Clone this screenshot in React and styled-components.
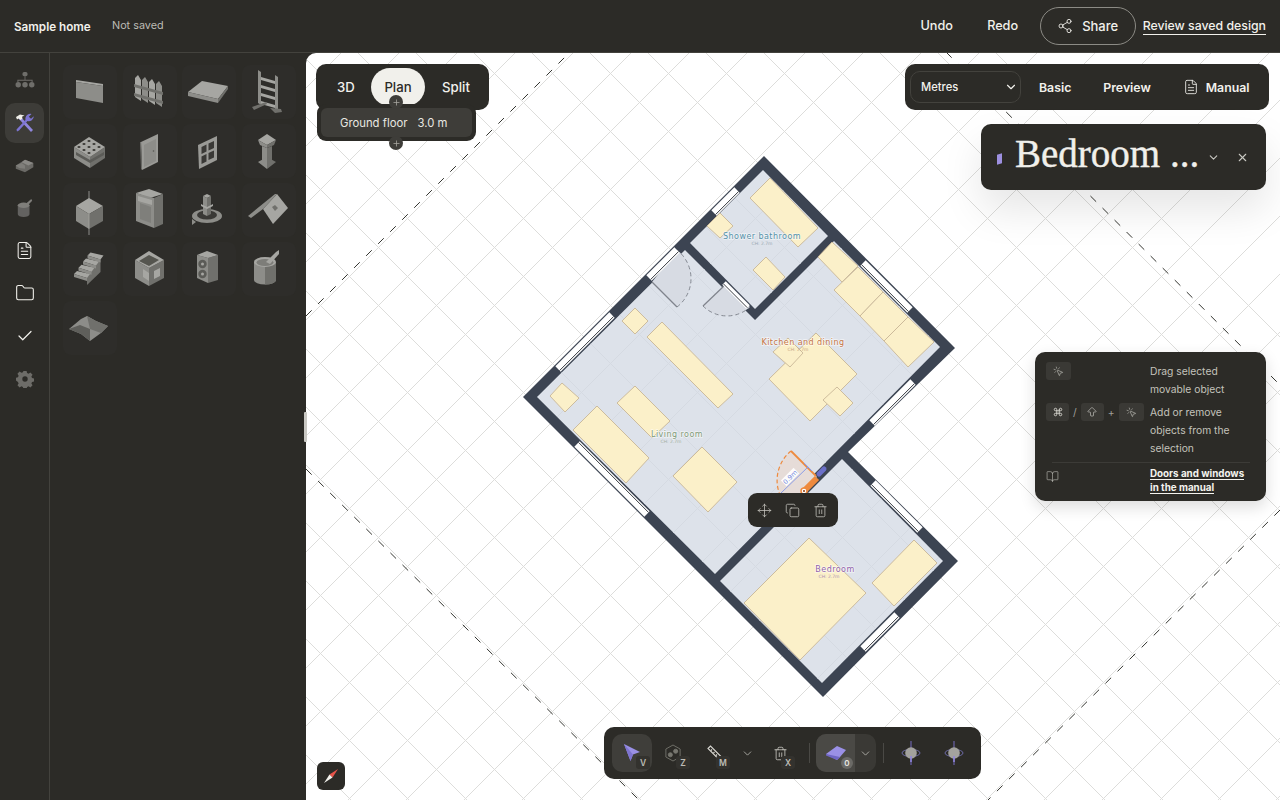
import React from "react";
import styled, { createGlobalStyle } from "styled-components";
import {
  ArrowBigUp,
  BookOpen,
  Check,
  ChevronDown,
  Command,
  Copy,
  FileText,
  Folder,
  MousePointerClick,
  Move,
  Plus,
  Share2,
  Trash2,
  X,
} from "lucide-react";

const GlobalStyle = createGlobalStyle`
  html, body { margin: 0; padding: 0; height: 100%; overflow: hidden; background: #2c2b27; }
  body { font-family: "Inter", "Liberation Sans", sans-serif; color: #f2f1ec; }
`;

const Shell = styled.div`
  display: grid;
  grid-template-columns: 50px 256px 974px;
  grid-template-rows: 53px 747px;
  height: 800px;
  width: 1280px;
  overflow: hidden;
  background: #2c2b27;
`;

const TopBar = styled.header`
  grid-column: 1 / -1;
  display: flex;
  align-items: center;
  padding: 0 14px;
  border-bottom: 1px solid #43423d;
  box-sizing: border-box;
  font-size: 13px;
  font-weight: 600;
`;

const ProjectName = styled.span`
  font-size: 11.7px;
  font-weight: 600;
  width: 98px;
  margin-top: 1px;
`;

const SaveState = styled.span`
  font-size: 10.8px;
  font-weight: 400;
  color: #bdbcb5;
  margin-bottom: 1px;
  flex: 1;
`;

const TopAction = styled.span`
  width: 66px;
  text-align: center;
  font-size: 12.7px;
  font-weight: 500;
  margin-bottom: 1px;
`;

const SharePill = styled.span`
  display: flex;
  align-items: center;
  justify-content: center;
  gap: 9px;
  width: 96px;
  height: 38px;
  box-sizing: border-box;
  border: 1px solid #8c8b85;
  border-radius: 19px;
  margin: 0 7px 0 4px;
  font-size: 13px;
  font-weight: 500;
`;

const ReviewLink = styled.span`
  font-size: 12.3px;
  font-weight: 500;
  border-bottom: 1.5px solid #f2f1ec;
  padding-bottom: 1px;
`;

const Rail = styled.nav`
  display: flex;
  flex-direction: column;
  gap: 2.7px;
  padding: 7px 0 0 5px;
  border-right: 1px solid #43423d;
  box-sizing: border-box;
`;

const RailItem = styled.span`
  display: flex;
  align-items: center;
  justify-content: center;
  width: 39px;
  height: 40px;
  border-radius: 10px;
  background: ${(p) => (p.$active ? "#3d3c38" : "transparent")};
  color: #f2f1ec;
`;

const Palette = styled.div`
  display: grid;
  grid-template-columns: repeat(4, 54px);
  grid-auto-rows: 54px;
  gap: 5px 5.5px;
  padding: 12px 0 0 13px;
  align-content: start;
`;

const PaletteTile = styled.div`
  width: 54px;
  height: 54px;
  border-radius: 8px;
  background: #2e2d2a;
  svg { display: block; }
`;

const Canvas = styled.main`
  position: relative;
  background: #fff;
  border-top-left-radius: 10px;
  overflow: hidden;
`;

const ResizeGrip = styled.div`
  position: absolute;
  left: 304px;
  top: 412px;
  width: 3px;
  height: 30px;
  background: #c9c8c3;
  border-radius: 1px;
`;

const PlanDrawing = styled.svg`
  position: absolute;
  inset: 0;
  display: block;
`;

const RoomLabel = styled.text`
  font-family: "DejaVu Sans", sans-serif;
  font-size: 8px;
  letter-spacing: 0.45px;
  text-anchor: middle;
  paint-order: stroke;
  stroke: rgba(255, 255, 255, 0.6);
  stroke-width: 1.5px;
`;

const RoomHeight = styled.text`
  font-family: "DejaVu Sans", sans-serif;
  font-size: 4.5px;
  text-anchor: middle;
  opacity: 0.8;
`;

const ViewSwitch = styled.div`
  position: absolute;
  left: 10px;
  top: 11px;
  width: 173px;
  height: 46px;
  box-sizing: border-box;
  background: #2c2b27;
  border-radius: 10px;
  display: flex;
  padding: 4px 0 0 5px;
`;

const ViewOption = styled.span`
  width: ${(p) => p.$w}px;
  height: 38px;
  border-radius: 20px;
  display: flex;
  align-items: center;
  justify-content: center;
  font-size: 13.2px;
  font-weight: 500;
  color: ${(p) => (p.$active ? "#2c2b27" : "#f2f1ec")};
  background: ${(p) => (p.$active ? "#f1f0eb" : "transparent")};
`;

const FloorControl = styled.div`
  position: absolute;
  left: 11px;
  top: 51px;
  width: 159px;
  height: 37px;
  box-sizing: border-box;
  padding: 4px;
  background: #2c2b27;
  border-radius: 9px;
`;

const FloorInner = styled.div`
  height: 29px;
  background: #3e3d39;
  border-radius: 6px;
  display: flex;
  align-items: center;
  gap: 10px;
  padding-left: 19px;
  font-size: 11.3px;
  color: #e8e7e1;
`;

const FloorStep = styled.span`
  position: absolute;
  left: 72px;
  top: ${(p) => p.$top}px;
  width: 14px;
  height: 14px;
  border-radius: 50%;
  background: #3e3d39;
  color: #a9a8a2;
  display: flex;
  align-items: center;
  justify-content: center;
`;

const UnitBar = styled.div`
  position: absolute;
  left: 599px;
  top: 11px;
  width: 364px;
  height: 46px;
  box-sizing: border-box;
  background: #2c2b27;
  border-radius: 10px;
  display: flex;
  align-items: center;
  padding-left: 5px;
  font-size: 12.3px;
  font-weight: 600;
`;

const UnitSelect = styled.div`
  width: 111px;
  height: 32px;
  box-sizing: border-box;
  border: 1px solid #43423d;
  border-radius: 10px;
  display: flex;
  align-items: center;
  justify-content: space-between;
  padding: 0 2px 0 10px;
  font-size: 11.2px;
  font-weight: 500;
  margin-right: 18px;
`;

const UnitLink = styled.span`
  display: flex;
  align-items: center;
  gap: 7px;
  margin-right: ${(p) => p.$gap}px;
`;

const TitlePanel = styled.div`
  position: absolute;
  left: 675px;
  top: 71px;
  width: 285px;
  height: 66px;
  background: #2c2b27;
  border-radius: 10px;
  box-shadow: 0 20px 40px rgba(0, 0, 0, 0.1);
  display: flex;
  align-items: center;
  padding-left: 16px;
  box-sizing: border-box;
  color: #f1f0eb;
`;

const TitleSwatch = styled.span`
  width: 5px;
  height: 10px;
  margin: 4px 13px 0 0;
  background: #9d90e0;
  transform: skewY(-18deg);
`;

const TitleText = styled.span`
  font-family: "Liberation Serif", serif;
  font-size: 39px;
  line-height: 1;
  width: 184px;
  white-space: nowrap;
  margin-bottom: 7px;
  -webkit-text-stroke: 0.4px #f1f0eb;
`;

const TitleIcon = styled.span`
  display: flex;
  width: 29px;
  justify-content: center;
  color: #c9c8c2;
`;

const HelpPanel = styled.aside`
  position: absolute;
  left: 729px;
  top: 299px;
  width: 231px;
  height: 149px;
  box-sizing: border-box;
  background: #2c2b27;
  border-radius: 10px;
  box-shadow: 0 6px 16px rgba(0, 0, 0, 0.14);
  padding: 10px 11px 0 11px;
  font-size: 10.3px;
  line-height: 18px;
  color: #c3c2bb;
  display: grid;
  grid-template-columns: 104px 1fr;
  align-content: start;
  row-gap: 5px;
`;

const KeyRow = styled.div`
  display: flex;
  align-items: center;
  gap: 4px;
  height: 18px;
  align-self: start;
  color: #9f9e98;
`;

const KeyCap = styled.span`
  display: flex;
  align-items: center;
  justify-content: center;
  height: 18px;
  width: ${(p) => p.$w}px;
  border-radius: 3px;
  background: #3a3935;
  color: #d5d4ce;
`;

const HelpRule = styled.div`
  grid-column: 1 / -1;
  height: 1px;
  background: #3c3b37;
  margin: 0 5px -5px 6px;
`;

const HelpLink = styled.span`
  color: #f4f3ee;
  font-size: 9.8px;
  font-weight: 700;
  line-height: 14px;
  display: block;
`;

const HelpLinkLine = styled.span`
  border-bottom: 1px solid #f4f3ee;
`;

const ObjectActions = styled.div`
  position: absolute;
  left: 442px;
  top: 440px;
  width: 90px;
  height: 34px;
  box-sizing: border-box;
  background: #2c2b27;
  border-radius: 9px;
  display: flex;
  align-items: center;
  padding-left: 9px;
  gap: 13px;
  color: #c9c8c2;
`;

const Dock = styled.div`
  position: absolute;
  left: 298px;
  top: 674px;
  width: 377px;
  height: 52px;
  box-sizing: border-box;
  padding: 7px 5px 7px 8px;
  background: #2c2b27;
  border-radius: 10px;
  display: flex;
  align-items: stretch;
`;

const DockButton = styled.span`
  position: relative;
  flex: none;
  width: ${(p) => p.$w}px;
  display: flex;
  align-items: center;
  justify-content: center;
  border-radius: 10px;
  color: #bdbcb5;
  background: ${(p) => (p.$active ? "#3f3e3a" : "transparent")};
`;

const DockKey = styled.span`
  position: absolute;
  right: ${(p) => p.$right}px;
  bottom: 3px;
  width: 14px;
  height: 13px;
  display: flex;
  align-items: center;
  justify-content: center;
  border-radius: 3px;
  background: #33322e;
  font-size: 8.5px;
  font-weight: 600;
  color: #bdbcb5;
`;

const DockDivider = styled.span`
  flex: none;
  width: 14px;
  display: flex;
  justify-content: center;
  align-items: center;
  &::before {
    content: "";
    width: 1px;
    height: 20px;
    background: #4a4945;
  }
`;

const DockGroup = styled.div`
  flex: none;
  width: 60px;
  display: flex;
  border-radius: 10px;
  overflow: hidden;
  background: #3a3935;
`;

const DockGroupMain = styled.span`
  position: relative;
  width: 39px;
  background: #4a4945;
  display: flex;
  align-items: center;
  justify-content: center;
`;

const DockGroupMore = styled.span`
  flex: 1;
  display: flex;
  align-items: center;
  justify-content: center;
  color: #bdbcb5;
`;

const CountBadge = styled.span`
  position: absolute;
  right: 2px;
  bottom: 3px;
  width: 12px;
  height: 12px;
  border-radius: 50%;
  background: #6b6a66;
  display: flex;
  align-items: center;
  justify-content: center;
  font-size: 8px;
  font-weight: 600;
  color: #e9e8e2;
`;

const CompassButton = styled.span`
  position: absolute;
  left: 11px;
  top: 709px;
  width: 28px;
  height: 28px;
  border-radius: 6px;
  background: #2c2b27;
  display: flex;
  align-items: center;
  justify-content: center;
`;

/* grey isometric thumbnails for the catalogue */
const T = "#a6a6a2";
const M = "#8d8d89";
const D = "#70706c";
const H = "#3a3936";

const Thumb = ({ children }) => (
  <svg width="54" height="54" viewBox="0 0 54 54">
    {children}
  </svg>
);

const Poly = ({ c, p }) => <polygon fill={c} points={p} />;

const catalogue = [
  <>
    <Poly c={T} p="13,15 40,19 40,21 13,17" />
    <Poly c={M} p="13,17 40,21 40,38 13,33" />
  </>,
  <>
    {[12, 19, 26, 33].map((x, i) => (
      <polygon key={x} fill={i % 2 ? M : T} points={`${x},${13 + i * 2} ${x + 3},${10 + i * 2} ${x + 6},${15 + i * 2} ${x + 6},${36 + i * 2} ${x},${32 + i * 2}`} />
    ))}
    <Poly c={D} p="11,19 40,27 40,30 11,22" />
    <Poly c={D} p="11,28 40,36 40,39 11,31" />
  </>,
  <>
    <Poly c={T} p="6,27 20,16 46,21 36,34" />
    <Poly c={M} p="6,27 36,34 36,38 6,31" />
    <Poly c={D} p="36,34 46,21 46,24 36,38" />
  </>,
  <>
    <Poly c={M} p="16,5 19,7 19,40 16,38" />
    <Poly c={M} p="33,10 36,12 36,46 33,44" />
    {[12, 20, 28, 36].map((y) => (
      <polygon key={y} fill={T} points={`19,${y} 33,${y + 4} 33,${y + 7} 19,${y + 3}`} />
    ))}
    <Poly c={D} p="10,42 24,37 25,39 12,45" />
    <Poly c={D} p="28,43 39,44 40,47 33,48" />
  </>,
  <>
    <Poly c={M} p="11,23 27,33 27,44 11,34" />
    <Poly c={D} p="27,33 42,23 42,34 27,44" />
    <Poly c={T} p="26,13 42,23 27,33 11,23" />
    <Poly c="#5b5b57" p="13,28 27,36 41,28 41,31 27,39 13,31" />
    {[[26, 17], [31, 20], [36, 23], [21, 20], [26, 23], [31, 26], [16, 23], [21, 26], [26, 29]].map(([x, y]) => (
      <ellipse key={`${x}-${y}`} cx={x} cy={y} rx="1.6" ry="1" fill={H} />
    ))}
  </>,
  <>
    <Poly c="#9a9a96" p="18,18 35,10 35,38 19,46" />
    <Poly c={D} p="17,18 18,18 19,46 18,45" />
    <Poly c={M} p="21,21 33,15 33,37 21,43" />
    <circle cx="30.5" cy="27" r="0.8" fill="#55554f" />
  </>,
  <>
    <Poly c="#9a9a96" p="16,21 35,12 35,36 17,45" />
    <Poly c={H} p="19.500,23 24.500,20.500 24.500,27.500 19.500,30" />
    <Poly c={H} p="26.500,19.500 32,17 32,24 26.500,26.500" />
    <Poly c={H} p="19.500,32.500 24.500,30 24.500,37.500 19.500,40" />
    <Poly c={H} p="26.500,29 32,26.500 32,33.500 26.500,36" />
  </>,
  <>
    <Poly c={T} p="16,16 25,10 34,16 25,21" />
    <Poly c={M} p="16,16 25,21 25,24 18,21" />
    <Poly c={D} p="25,21 34,16 32,21 25,24" />
    <Poly c={M} p="20,22 25,24 25,39 20,37" />
    <Poly c={D} p="25,24 30,22 30,37 25,39" />
    <Poly c={M} p="16,38 25,33 25,45" />
    <Poly c={D} p="25,33 34,38 25,45" />
  </>,
  <>
    <Poly c={T} p="26,15 40,23 26,31 13,23" />
    <Poly c={M} p="13,23 26,31 26,46 13,38" />
    <Poly c={D} p="26,31 40,23 40,38 26,46" />
    <Poly c={T} p="25.6,8 26.4,8 26.4,52 25.6,52" />
  </>,
  <>
    <Poly c={T} p="13,10 26,6 40,11 27,15" />
    <Poly c={M} p="13,10 31,15 31,45 13,38" />
    <Poly c={D} p="31,15 40,11 40,41 31,45" />
    <Poly c={T} p="15,13 29,17 29,22 15,18" />
    <Poly c="#7f7f7b" p="17,20 28,24 28,40 17,36" />
  </>,
  <>
    <ellipse cx="25" cy="33" rx="15" ry="7" fill={M} />
    <ellipse cx="25" cy="32" rx="10" ry="4.5" fill={H} />
    <Poly c={M} p="10,36 14,39 10,42" />
    <Poly c={T} p="21,13 25,11 29,13 25,15" />
    <Poly c={M} p="21,13 25,15 25,33 21,31" />
    <Poly c={D} p="25,15 29,13 29,31 25,33" />
    <Poly c={T} p="19,21 25,24 31,21 31,23 25,26 19,23" />
  </>,
  <>
    <Poly c={T} p="21,26 35,11 46,25 31,41" />
    <Poly c={M} p="6,33 33,11 35,11 21,26 9,35" />
    <Poly c={D} p="30,24 33,22 36,25 33,28" />
  </>,
  <>
    <Poly c={D} p="37.500,14 37.500,30 24,43 24,30" />
    {[0, 1, 2, 3].map((i) => {
      const x = 11 + i * 4.5;
      const y = 32 - i * 6.2;
      return (
        <g key={i}>
          <polygon fill={T} points={`${x + 3},${y - 3} ${x + 16},${y} ${x + 13},${y + 4} ${x},${y}`} />
          <polygon fill={M} points={`${x},${y} ${x + 13},${y + 4} ${x + 13},${y + 7} ${x},${y + 3}`} />
        </g>
      );
    })}
  </>,
  <>
    <Poly c={M} p="12,18 26,26 26,44 12,36" />
    <Poly c={D} p="26,26 41,18 41,36 26,44" />
    <Poly c={T} p="26,9 41,18 26,26 12,18" />
    <Poly c="#55554f" p="16,19 26,13 36,18 26,24" />
    <Poly c={T} p="20,27 26,31 26,39 20,35" />
    <Poly c={T} p="31,29 37,26 37,34 31,37" />
  </>,
  <>
    <Poly c={M} p="15,13 26,16 26,41 15,36" />
    <Poly c={D} p="26,16 36,13 36,38 26,41" />
    <Poly c={T} p="15,13 25,9 36,13 26,16" />
    <circle cx="20.5" cy="22" r="4.2" fill="#5b5b57" />
    <circle cx="20.5" cy="32" r="4.2" fill="#5b5b57" />
    <circle cx="20.5" cy="22" r="1.5" fill={T} />
    <circle cx="20.5" cy="32" r="1.5" fill={T} />
  </>,
  <>
    <path d="M12 20 V38 A11 4.5 0 0 0 34 38 V20 Z" fill={M} />
    <path d="M23 20 H34 V38 A11 4.5 0 0 1 23 42.5 Z" fill={D} />
    <ellipse cx="23" cy="20" rx="11" ry="5" fill={T} />
    <ellipse cx="23" cy="20.5" rx="8.5" ry="3.4" fill="#7d7d79" />
    <Poly c={T} p="24,20 34,10 37,8 37,12 28,22" />
  </>,
  <>
    <Poly c={M} p="6,28 18,18 24,15 33,20 45,25 38,32 27,40 18,33" />
    <Poly c={D} p="24,15 33,20 45,25 38,32 27,28" />
    <Poly c="#5f5f5b" p="6,28 18,33 27,40 27,28 17,24" />
  </>,
];

const HierarchyIcon = () => (
  <svg width="22" height="19" viewBox="0 0 26 22" fill="#6f6e6a">
    <rect x="10" y="1" width="6" height="5" rx="2" />
    <path d="M12.5 6h1v5h-1zM4 10h18v3h-1.2v-1.8H5.200V13H4z" />
    <circle cx="5" cy="16" r="3.2" />
    <circle cx="13" cy="16" r="3.2" />
    <circle cx="21" cy="16" r="3.2" />
  </svg>
);

const ToolsIcon = () => (
  <svg width="20" height="20" viewBox="0 0 20 20">
    <path d="M5 3 L18 17 L16 19 L3.500 5.500 Z" fill="#8f86dc" />
    <path d="M16.500 1 L13.800 3.700 L16 5.800 L18.800 3.200 A5 5 0 0 1 12.500 8 L4 17.500 L2 18.500 L1.500 16.500 L10.500 7 A5 5 0 0 1 16.500 1 Z" fill="#7d74d2" />
    <path d="M1 4 L5 1.500 L9.500 2.500 L7 3.800 L7.500 5.500 L5.500 7 L3.500 5.500 L2 6.500 Z" fill="#efeee9" />
  </svg>
);

const SofaIcon = () => (
  <svg width="20" height="17" viewBox="0 0 24 20">
    <polygon points="1,10 12,3 22,7 22,12 12,18 1,14" fill="#6b6a66" />
    <polygon points="1,10 8,7 12,10 12,14 5,13" fill="#7f7e7a" />
    <polygon points="12,3 22,7 16,10 8,6" fill="#8a8985" />
  </svg>
);

const CanIcon = () => (
  <svg width="18" height="20" viewBox="0 0 20 22">
    <path d="M2 8 V18 A6.500 3 0 0 0 15 18 V8 Z" fill="#636260" />
    <ellipse cx="8.500" cy="8" rx="6.500" ry="3" fill="#7f7e7a" />
    <polygon points="9,8 17,1 18,3 12,9" fill="#7f7e7a" />
  </svg>
);

const GearIcon = () => (
  <svg width="18" height="18" viewBox="0 0 20 20">
    <path
      fill="#6d6c68"
      fillRule="evenodd"
      d="M8.200 1h3.600l.5 2.400 1.700.7 2-1.300 2.400 2.500-1.300 2 .7 1.700 2.200.5v3.300l-2.200.5-.7 1.700 1.300 2-2.400 2.400-2-1.300-1.700.7-.5 2.300H8.200l-.5-2.300-1.700-.7-2 1.300-2.400-2.400 1.300-2-.7-1.700L0 11.800V8.500l2.200-.5.700-1.700-1.300-2L4 1.800l2 1.300 1.700-.7zM10 7a3 3 0 1 0 0 6 3 3 0 0 0 0-6z"
    />
  </svg>
);

const CursorIcon = () => (
  <svg width="20" height="20" viewBox="0 0 20 20">
    <polygon points="2,1 18,9 11,11.500 8.500,18" fill="#9a90e6" />
    <polygon points="2,1 11,11.500 8.500,18" fill="#7e74d0" />
  </svg>
);

const ExplodeIcon = () => (
  <svg width="16" height="18" viewBox="0 0 18 20" fill="none" stroke="#77766f" strokeWidth="1">
    <polygon points="9,1 17,5.500 17,14.500 9,19 1,14.500 1,5.500" />
    <circle cx="6" cy="12" r="2.300" fill="#77766f" />
    <circle cx="12" cy="8" r="2.300" fill="#77766f" />
  </svg>
);

const TapeIcon = () => (
  <svg width="16" height="16" viewBox="0 0 16 16" fill="none" stroke="#d9d8d2" strokeWidth="1.100">
    <path d="M1 3.500 L3.500 1 L15 12.500 L12.500 15 Z" />
    <path d="M5 4.500l-1 1M7.500 7l-1 1M10 9.500l-1 1" />
  </svg>
);

const SlabIcon = () => (
  <svg width="22" height="16" viewBox="0 0 22 16">
    <polygon points="1,9 12,1 21,5 15,12 12,15" fill="#9a90e6" />
    <polygon points="1,9 15,12 12,15 1,10.500" fill="#6f66c4" />
  </svg>
);

const LevelIcon = () => (
  <svg width="20" height="24" viewBox="0 0 20 24">
    <rect x="9.400" y="0" width="1.200" height="24" fill="#7e74d0" opacity="0.75" />
    <ellipse cx="10" cy="12" rx="9" ry="3.600" fill="none" stroke="#6c6aa6" strokeWidth="1" />
    <circle cx="10" cy="12" r="5.800" fill="#a3a29e" />
    <rect x="9.200" y="15" width="1.600" height="6" fill="#8f86dc" />
  </svg>
);

const CompassIcon = () => (
  <svg width="16" height="16" viewBox="0 0 16 16">
    <polygon points="15,1 6.500,6.500 9.500,9.500" fill="#e8544a" />
    <polygon points="1,15 6.500,6.500 9.500,9.500" fill="#f2f1ec" />
  </svg>
);

/* floor plan, in page coordinates */
const GRID_SPACE = 58;
const gridLines = [];
for (let c = 1148 - GRID_SPACE * 13; c < 2200; c += GRID_SPACE) {
  gridLines.push({ x1: 306, y1: c - 306, x2: 1280, y2: c - 1280 });
}
for (let d = 15 - GRID_SPACE * 20; d < 1000; d += GRID_SPACE) {
  gridLines.push({ x1: 306, y1: 306 - d, x2: 1280, y2: 1280 - d });
}

const OUTER = "764,156 955,348 848,452 958,561 823,697 523,397";
const BATH = "763,170 828,236 755,309 690,243";
const MAIN = "537,397 685,250 755,320 834,241 940,347 715,574";
const BED = "842,459 943,561 822,683 720,581";

const furniture = [
  "770,178 818,228 798,247 750,198",
  "720,213 733,226 720,238 707,226",
  "766,257 785,277 773,290 753,270",
  "832,242 858,266 842,282 818,257",
  "858,267 883,292 860,316 834,290",
  "883,292 908,317 884,341 860,316",
  "908,317 934,342 908,367 884,341",
  "816,333 857,374 810,421 769,379",
  "788,338 803,353 790,367 773,352",
  "837,387 853,403 840,416 823,400",
  "662,322 733,394 718,408 647,337",
  "635,308 648,321 635,334 622,321",
  "562,383 579,398 565,412 550,396",
  "635,386 670,421 652,438 617,403",
  "597,406 649,458 626,483 573,430",
  "702,447 737,482 708,512 673,476",
  "809,538 866,593 800,660 744,603",
  "914,540 937,563 894,606 872,583",
];

const windows = [
  [714, 213, 737, 190, 1, 7.5],
  [649, 278, 677, 250, 1, 7.5],
  [558, 369, 612, 315, 1, 7.5],
  [863, 263, 910, 310, 1, 7.5],
  [872, 423, 913, 382, 1, 7.5],
  [577, 444, 647, 514, -1, 7.5],
  [873, 483, 920, 530, 1, 7.5],
  [863, 649, 897, 615, 1, 7.5],
  [724, 283, 748, 307, 1, 5],
];

const WallWindow = ({ at }) => {
  const [x1, y1, x2, y2, side, width] = at;
  const len = Math.hypot(x2 - x1, y2 - y1);
  const off = width > 6 ? 2.2 : 1;
  const nx = ((y2 - y1) / len) * off * side;
  const ny = (-(x2 - x1) / len) * off * side;
  return (
    <g>
      <line x1={x1} y1={y1} x2={x2} y2={y2} stroke="#fff" strokeWidth={width} />
      <line x1={x1 - nx} y1={y1 - ny} x2={x2 - nx} y2={y2 - ny} stroke="#23262c" strokeWidth="0.9" />
    </g>
  );
};

const FloorPlan = () => (
  <PlanDrawing width="974" height="747" viewBox="306 53 974 747">
    <defs>
      <clipPath id="floors">
        <polygon points={BATH} />
        <polygon points={MAIN} />
        <polygon points={BED} />
      </clipPath>
    </defs>
    <g stroke="#dddddb" strokeWidth="1">
      {gridLines.map((l, i) => (
        <line key={i} {...l} />
      ))}
    </g>
    <g stroke="#33342f" strokeWidth="1" strokeDasharray="8 9">
      <line x1="306" y1="316" x2="570" y2="52" />
      <line x1="306" y1="469" x2="640" y2="801" />
      <line x1="946" y1="52" x2="1280" y2="385" />
      <line x1="1280" y1="510" x2="988" y2="800" />
    </g>
    <polygon points={OUTER} fill="#3c4452" />
    <polygon points={BATH} fill="#dde2ea" />
    <polygon points={MAIN} fill="#dde2ea" />
    <polygon points={BED} fill="#dde2ea" />
    <g clipPath="url(#floors)" stroke="#d5dae2" strokeWidth="1">
      {gridLines.map((l, i) => (
        <line key={i} {...l} />
      ))}
    </g>
    <path d="M652 282 L677 307 A36 36 0 0 0 677 250 Z" fill="#d7dbe3" />
    <path d="M677 307 A36 36 0 0 0 677 250" fill="none" stroke="#7a7f88" strokeWidth="0.9" strokeDasharray="4 3" />
    <line x1="652" y1="282" x2="677" y2="307" stroke="#7f838c" strokeWidth="1.200" />
    <path d="M725 285 L703 306 A34 34 0 0 0 750 307 Z" fill="#d7dbe3" />
    <path d="M703 306 A34 34 0 0 0 750 307" fill="none" stroke="#7a7f88" strokeWidth="0.9" strokeDasharray="4 3" />
    <line x1="725" y1="285" x2="703" y2="306" stroke="#7f838c" strokeWidth="1.200" />
    {windows.map((w) => (
      <WallWindow key={w.join()} at={w} />
    ))}
    {furniture.map((p) => (
      <polygon key={p} points={p} fill="#fbf0c9" stroke="#c8b797" strokeWidth="0.9" />
    ))}

    <path d="M791 451 L817 477 L800 494 L780 495 A38 38 0 0 1 791 451 Z" fill="#e6dcd8" />
    <path d="M791 451 A38 38 0 0 0 780 495" fill="none" stroke="#ee8a3e" strokeWidth="1.200" strokeDasharray="4 2.500" />
    <line x1="791" y1="451" x2="816" y2="476" stroke="#ee8a3e" strokeWidth="1.800" />
    <line x1="808" y1="467" x2="781" y2="493" stroke="#8b9de8" strokeWidth="1" />
    <line x1="804" y1="463" x2="812" y2="471" stroke="#8b9de8" strokeWidth="1" />
    <line x1="803" y1="492" x2="817" y2="478" stroke="#ee8a3e" strokeWidth="6" />
    <line x1="819" y1="474" x2="824" y2="469" stroke="#6a6fc8" strokeWidth="5" strokeLinecap="round" />
    <circle cx="804" cy="491" r="3" fill="#fff" stroke="#ee8a3e" strokeWidth="1.500" />
    <circle cx="804" cy="491" r="1" fill="#8a3a10" />
    <g transform="rotate(-45 790 477)">
      <rect x="781" y="473" width="18" height="8" fill="#fff" opacity="0.9" />
      <text x="790" y="479.500" textAnchor="middle" fontSize="6.500" fontFamily="DejaVu Sans, sans-serif" fill="#6f87e0">0.9m</text>
    </g>

    <RoomLabel x="762" y="239" fill="#5390a8">Shower bathroom</RoomLabel>
    <RoomHeight x="762" y="245" fill="#8a9aa5">CH: 2.7m</RoomHeight>
    <RoomLabel x="803" y="345" fill="#c47445">Kitchen and dining</RoomLabel>
    <RoomHeight x="798" y="351" fill="#b9906f">CH: 2.7m</RoomHeight>
    <RoomLabel x="677" y="437" fill="#7f9a76">Living room</RoomLabel>
    <RoomHeight x="671" y="443" fill="#95a58f">CH: 2.7m</RoomHeight>
    <RoomLabel x="835" y="572" fill="#9163ab">Bedroom</RoomLabel>
    <RoomHeight x="829" y="578" fill="#9a7aae">CH: 2.7m</RoomHeight>
  </PlanDrawing>
);

export default function App() {
  return (
    <>
      <GlobalStyle />
      <Shell>
        <TopBar>
          <ProjectName>Sample home</ProjectName>
          <SaveState>Not saved</SaveState>
          <TopAction>Undo</TopAction>
          <TopAction>Redo</TopAction>
          <SharePill>
            <Share2 size={16} strokeWidth={1.3} />
            Share
          </SharePill>
          <ReviewLink>Review saved design</ReviewLink>
        </TopBar>

        <Rail>
          <RailItem><HierarchyIcon /></RailItem>
          <RailItem $active><ToolsIcon /></RailItem>
          <RailItem><SofaIcon /></RailItem>
          <RailItem><CanIcon /></RailItem>
          <RailItem><FileText size={19} strokeWidth={1.3} /></RailItem>
          <RailItem><Folder size={20} strokeWidth={1.3} /></RailItem>
          <RailItem><Check size={18} strokeWidth={1.6} /></RailItem>
          <RailItem><GearIcon /></RailItem>
        </Rail>

        <Palette>
          {catalogue.map((art, i) => (
            <PaletteTile key={i}>
              <Thumb>{art}</Thumb>
            </PaletteTile>
          ))}
        </Palette>

        <Canvas>
          <FloorPlan />

          <ViewSwitch>
            <ViewOption $w={50}>3D</ViewOption>
            <ViewOption $w={54} $active>Plan</ViewOption>
            <ViewOption $w={62}>Split</ViewOption>
          </ViewSwitch>
          <FloorControl>
            <FloorInner>
              <span>Ground floor</span>
              <span>3.0 m</span>
            </FloorInner>
            <FloorStep $top={-9}><Plus size={9} /></FloorStep>
            <FloorStep $top={32}><Plus size={9} /></FloorStep>
          </FloorControl>

          <UnitBar>
            <UnitSelect>
              Metres
              <ChevronDown size={14} />
            </UnitSelect>
            <UnitLink $gap={32}>Basic</UnitLink>
            <UnitLink $gap={32}>Preview</UnitLink>
            <UnitLink>
              <FileText size={16} strokeWidth={1.3} />
              Manual
            </UnitLink>
          </UnitBar>

          <TitlePanel>
            <TitleSwatch />
            <TitleText>Bedroom ...</TitleText>
            <TitleIcon><ChevronDown size={13} /></TitleIcon>
            <TitleIcon><X size={13} /></TitleIcon>
          </TitlePanel>

          <HelpPanel>
            <KeyRow>
              <KeyCap $w={25}><MousePointerClick size={11} strokeWidth={1.2} /></KeyCap>
            </KeyRow>
            <div>Drag selected<br />movable object</div>
            <KeyRow>
              <KeyCap $w={23}><Command size={10} strokeWidth={2.2} /></KeyCap>
              /
              <KeyCap $w={23}><ArrowBigUp size={12} strokeWidth={1.2} /></KeyCap>
              +
              <KeyCap $w={25}><MousePointerClick size={11} strokeWidth={1.2} /></KeyCap>
            </KeyRow>
            <div>Add or remove<br />objects from the<br />selection</div>
            <HelpRule />
            <KeyRow><BookOpen size={13} strokeWidth={1.1} color="#c3c2bb" /></KeyRow>
            <HelpLink>
              <HelpLinkLine>Doors and windows</HelpLinkLine>
              <br />
              <HelpLinkLine>in the manual</HelpLinkLine>
            </HelpLink>
          </HelpPanel>

          <ObjectActions>
            <Move size={15} strokeWidth={1.2} />
            <Copy size={15} strokeWidth={1.2} />
            <Trash2 size={15} strokeWidth={1.2} />
          </ObjectActions>

          <Dock>
            <DockButton $w={40} $active>
              <CursorIcon />
              <DockKey $right={2}>V</DockKey>
            </DockButton>
            <DockButton $w={42}>
              <ExplodeIcon />
              <DockKey $right={4}>Z</DockKey>
            </DockButton>
            <DockButton $w={42}>
              <TapeIcon />
              <DockKey $right={6}>M</DockKey>
            </DockButton>
            <DockButton $w={22}><ChevronDown size={13} strokeWidth={1.5} /></DockButton>
            <DockButton $w={44}>
              <Trash2 size={15} strokeWidth={1.2} color="#d9d8d2" />
              <DockKey $right={7}>X</DockKey>
            </DockButton>
            <DockDivider />
            <DockGroup>
              <DockGroupMain>
                <SlabIcon />
                <CountBadge>0</CountBadge>
              </DockGroupMain>
              <DockGroupMore><ChevronDown size={13} strokeWidth={1.5} /></DockGroupMore>
            </DockGroup>
            <DockDivider />
            <DockButton $w={42}><LevelIcon /></DockButton>
            <DockButton $w={44}><LevelIcon /></DockButton>
          </Dock>

          <CompassButton><CompassIcon /></CompassButton>
        </Canvas>
      </Shell>
      <ResizeGrip />
    </>
  );
}
